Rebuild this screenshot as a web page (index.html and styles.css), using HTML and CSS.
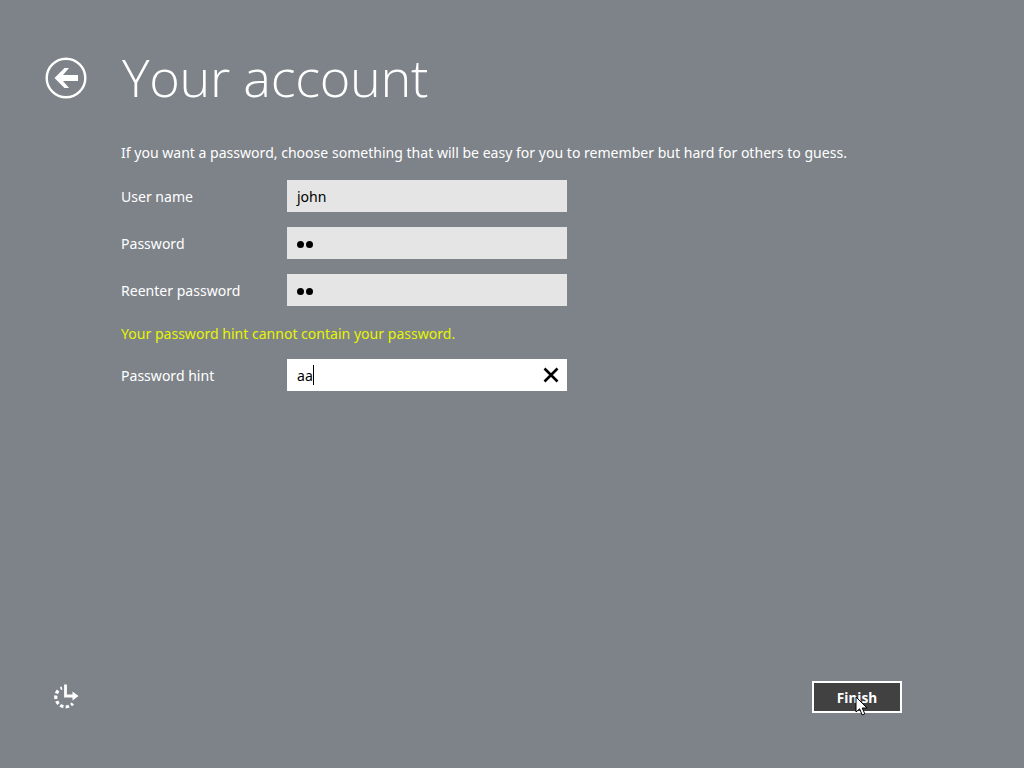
FILE: index.html
```html
<!DOCTYPE html>
<html lang="en">
<head>
<meta charset="utf-8">
<title>Your account</title>
<link rel="stylesheet" href="styles.css">
</head>
<body>
<div class="page">
  <header class="header">
    <svg class="back" width="42" height="42" viewBox="0 0 42 42" aria-hidden="true">
      <circle cx="21" cy="21" r="19.3" fill="none" stroke="#fff" stroke-width="2.4"/>
      <path d="M9.5 21 L19.5 11 L24 11 L18 18 L33 18 L33 24 L18 24 L24 31 L19.5 31 Z" fill="#fff"/>
    </svg>
    <h1 class="title">Your account</h1>
  </header>
  <main class="content">
    <p class="intro">If you want a password, choose something that will be easy for you to remember but hard for others to guess.</p>
    <div class="row">
      <span class="label">User name</span>
      <div class="field">john</div>
    </div>
    <div class="row">
      <span class="label">Password</span>
      <div class="field dots"><i></i><i></i></div>
    </div>
    <div class="row">
      <span class="label">Reenter password</span>
      <div class="field dots"><i></i><i></i></div>
    </div>
    <p class="error">Your password hint cannot contain your password.</p>
    <div class="row">
      <span class="label">Password hint</span>
      <div class="field active"><span class="typed">aa</span><span class="caret"></span>
        <svg class="clear" width="16" height="16" viewBox="0 0 16 16" aria-hidden="true">
          <path d="M1.5 1.5 L14.5 14.5 M14.5 1.5 L1.5 14.5" stroke="#000" stroke-width="2.6" fill="none"/>
        </svg>
      </div>
    </div>
  </main>
  <footer class="footer">
    <svg class="ease" width="26" height="26" viewBox="0 0 26 26" aria-hidden="true">
      <path d="M5.2 6.6 A9.5 9.5 0 0 0 5.2 19.4 A9.5 9.5 0 0 0 19.8 19.4" fill="none" stroke="#fff" stroke-width="3.2" stroke-dasharray="3.4 2.2"/>
      <path d="M7.5 4.5 L9 4" fill="none" stroke="#fff" stroke-width="3"/>
      <path d="M12.5 0.5 V12 H22" fill="none" stroke="#fff" stroke-width="2.8"/>
      <path d="M19.5 7.5 L25.5 12 L19.5 16.5 Z" fill="#fff"/>
    </svg>
    <div class="finish-wrap">
      <button class="finish" type="button">Finish</button>
      <svg class="cursor" width="14" height="21" viewBox="0 0 14 21" aria-hidden="true">
        <path d="M1 1 V16 L4.6 12.8 L7.2 19 L9.8 17.8 L7.2 12 H12 Z" fill="#fff" stroke="#000" stroke-width="1"/>
      </svg>
    </div>
  </footer>
</div>
</body>
</html>
```
FILE: styles.css
```css
* { box-sizing: border-box; }
html, body { margin: 0; height: 100%; }
body {
  background: #7e8389;
  color: #fff;
  font-family: "Noto Sans", "Open Sans", sans-serif;
  overflow: hidden;
}
.page {
  width: 1024px;
  height: 768px;
  display: flex;
  flex-direction: column;
  padding: 45px 122px 55px 45px;
}
.header {
  display: flex;
  align-items: center;
  gap: 35px;
  height: 66px;
}
.back { flex: none; }
.title {
  margin: -3px 0 0;
  font-family: "Open Sans", sans-serif;
  font-weight: 300;
  font-size: 52.2px;
  line-height: 66px;
  letter-spacing: -0.3px;
}
.content {
  padding-left: 76px;
  margin-top: 31px;
  font-size: 14.05px;
}
.intro {
  margin: 0 0 16px;
  line-height: 22px;
  height: 22px;
  white-space: nowrap;
}
.row {
  display: flex;
  align-items: center;
  height: 32px;
  margin-bottom: 15px;
}
.label { width: 166px; flex: none; }
.field {
  width: 280px;
  height: 32px;
  padding: 0 10px;
  background: #e4e5e4;
  color: #000;
  display: flex;
  align-items: center;
}
.field.dots { gap: 2px; }
.dots i {
  width: 7px;
  height: 7px;
  margin-top: 2px;
  border-radius: 50%;
  background: #000;
}
.field.active { background: #fff; }
.caret {
  width: 1px;
  height: 20px;
  background: #000;
}
.clear { margin-left: auto; margin-right: -2px; }
.error {
  margin: 17px 0 14px;
  height: 22px;
  line-height: 22px;
  color: #e6f500;
}
.footer {
  margin-top: auto;
  display: flex;
  align-items: center;
  justify-content: space-between;
  padding-left: 8px;
}
.ease { flex: none; }
.finish-wrap { position: relative; }
.finish {
  display: block;
  width: 90px;
  height: 32px;
  padding: 0;
  background: #414141;
  border: 2px solid #fff;
  color: #fff;
  font-family: "Noto Sans", sans-serif;
  font-size: 13.7px;
  font-weight: 700;
}
.cursor {
  position: absolute;
  left: 43px;
  top: 15px;
}
```
